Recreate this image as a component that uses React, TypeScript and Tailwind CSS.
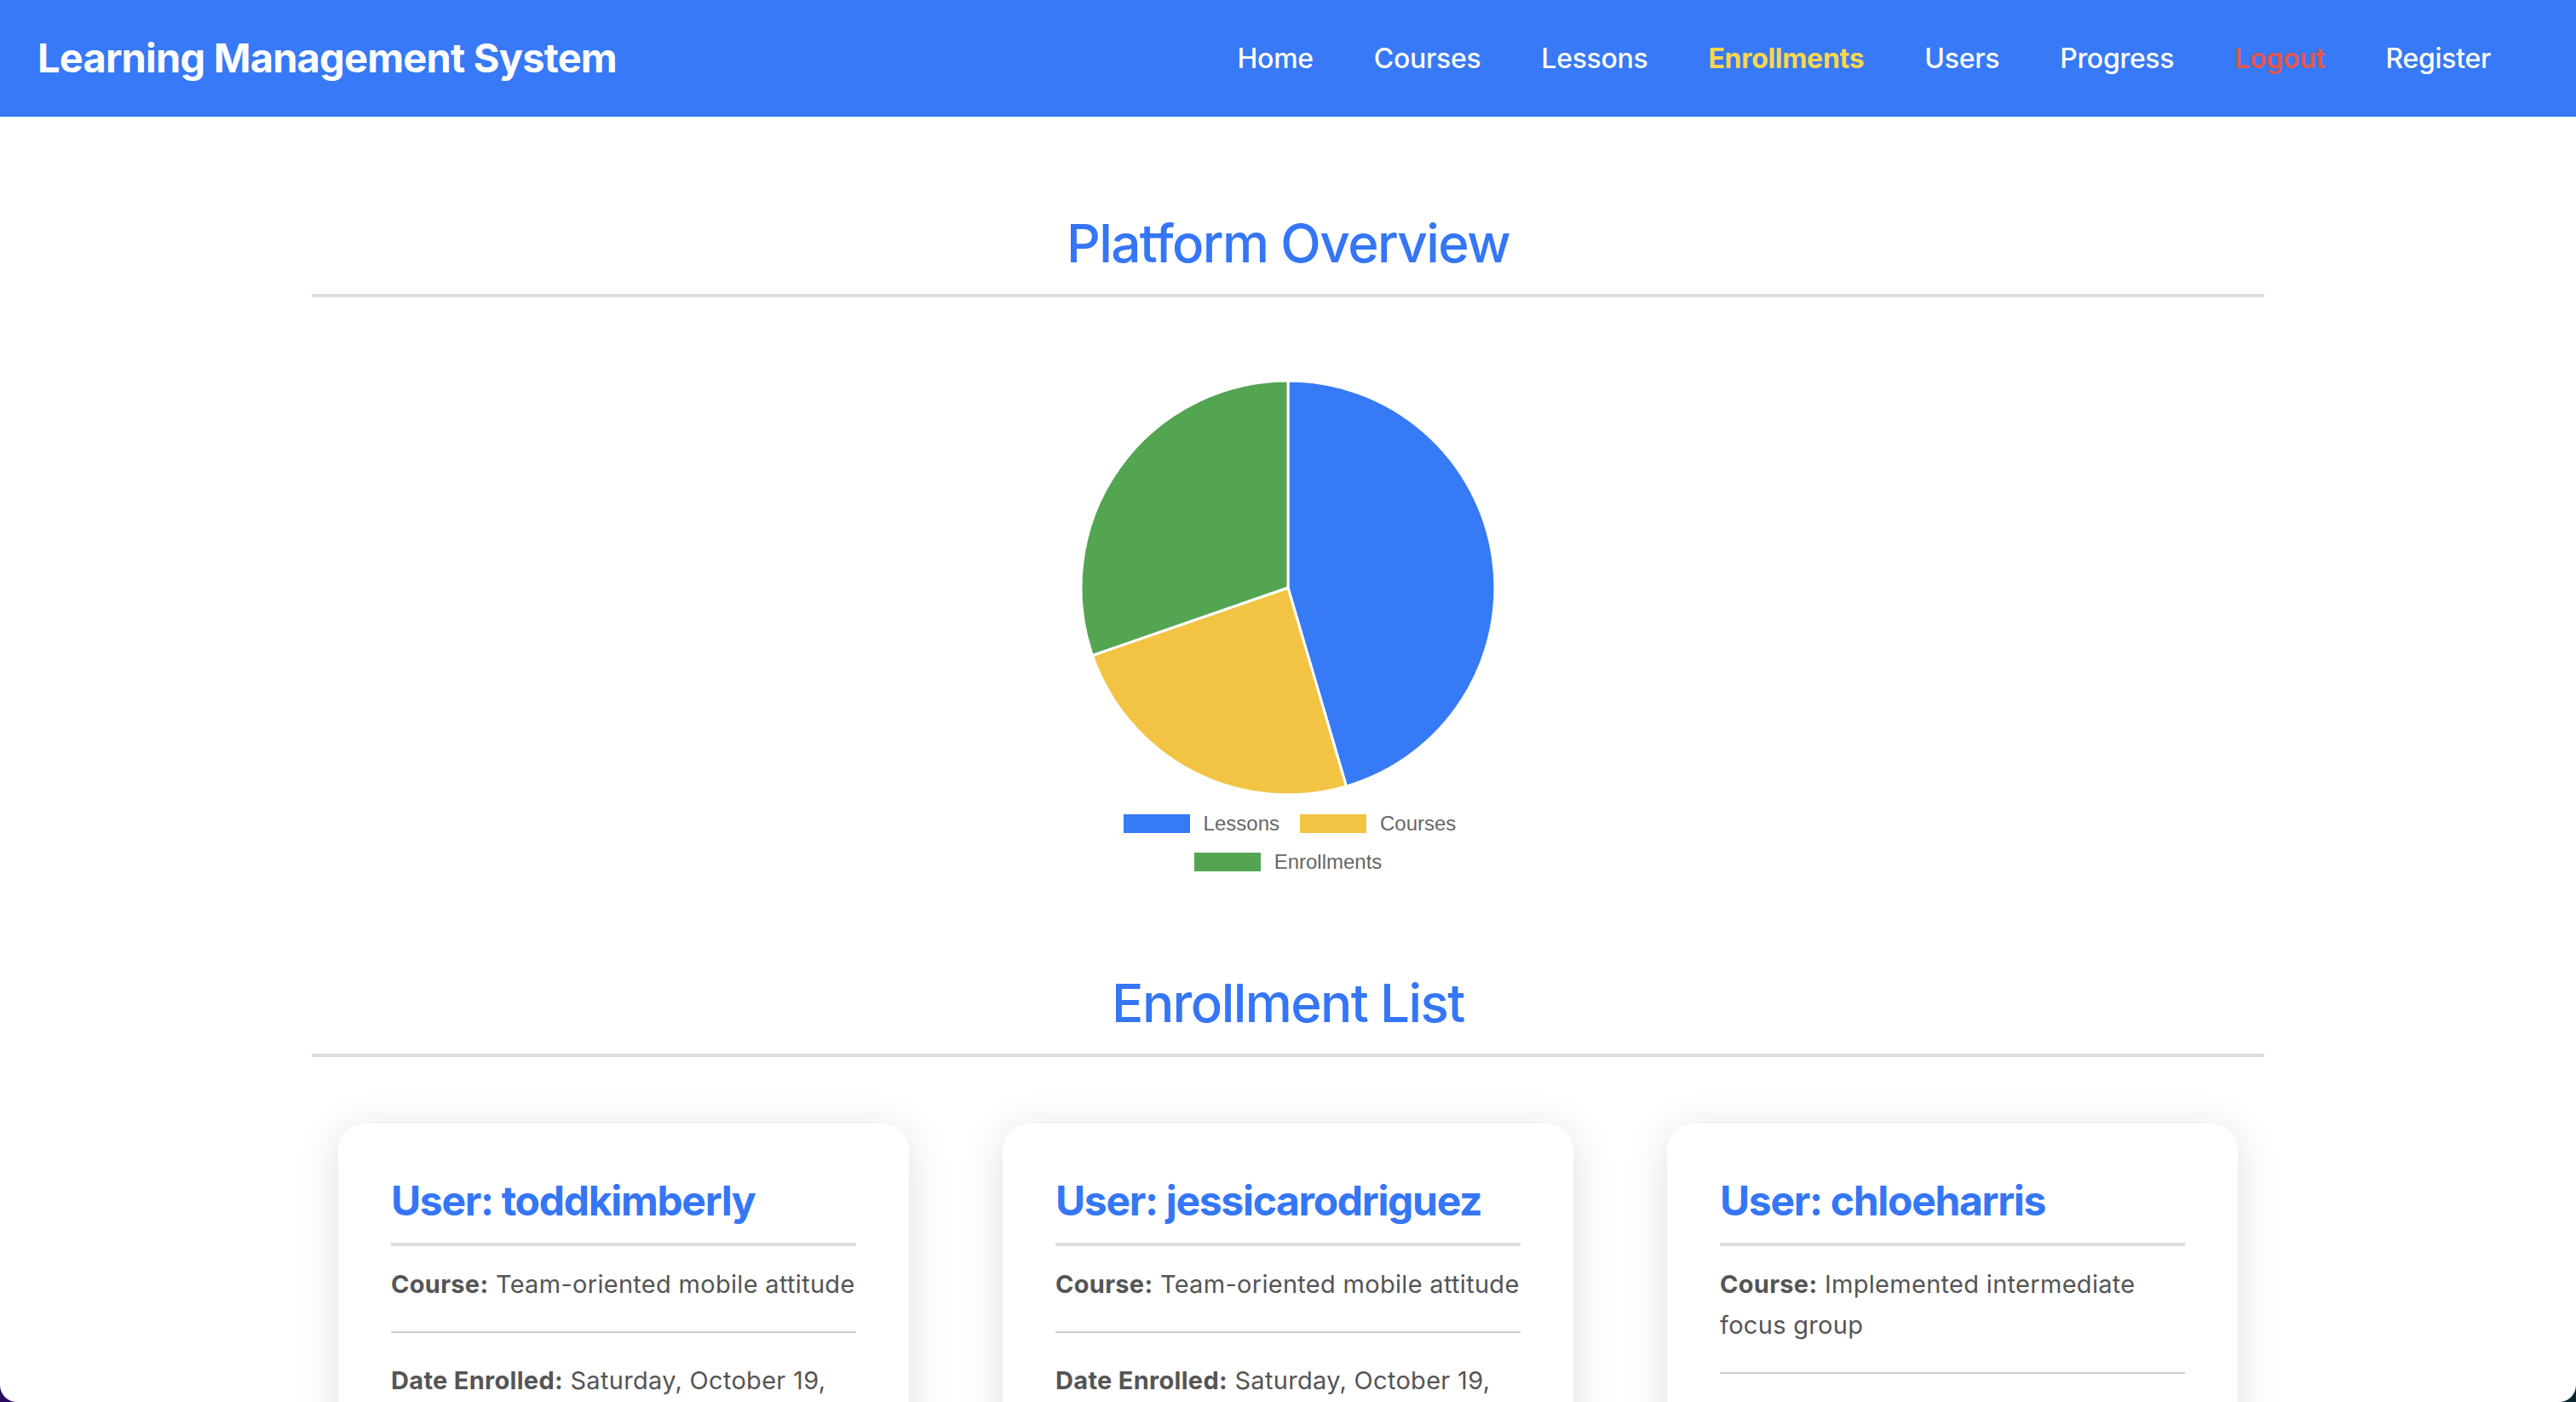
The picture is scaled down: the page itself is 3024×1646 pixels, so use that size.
import React from 'react';

const navLinks = [
    {label: 'Home', className: 'text-white font-medium'},
    {label: 'Courses', className: 'text-white font-medium'},
    {label: 'Lessons', className: 'text-white font-medium'},
    {label: 'Enrollments', className: 'text-[#f8d74c] font-bold'},
    {label: 'Users', className: 'text-white font-medium'},
    {label: 'Progress', className: 'text-white font-medium'},
    {label: 'Logout', className: 'text-[#e5564c] font-semibold'},
    {label: 'Register', className: 'text-white font-medium'},
];

const stats = [
    {label: 'Lessons', value: 15, color: '#377af6'},
    {label: 'Courses', value: 8, color: '#f3c343'},
    {label: 'Enrollments', value: 10, color: '#53a552'},
];

const enrollments = [
    {user: 'toddkimberly', course: 'Team-oriented mobile attitude', date: 'Saturday, October 19, 2024'},
    {user: 'jessicarodriguez', course: 'Team-oriented mobile attitude', date: 'Saturday, October 19, 2024'},
    {user: 'chloeharris', course: 'Implemented intermediate focus group', date: 'Saturday, October 19, 2024'},
];

function PieChart() {
    const size = 490;
    const c = size / 2;
    const r = 243;
    const total = stats.reduce((sum, s) => sum + s.value, 0);
    let start = 0;

    const slices = stats.map((s) => {
        const sweep = (s.value / total) * Math.PI * 2;
        const a0 = start;
        const a1 = start + sweep;
        start = a1;
        const x0 = c + r * Math.sin(a0);
        const y0 = c - r * Math.cos(a0);
        const x1 = c + r * Math.sin(a1);
        const y1 = c - r * Math.cos(a1);
        const large = sweep > Math.PI ? 1 : 0;
        const d = `M ${c} ${c} L ${x0} ${y0} A ${r} ${r} 0 ${large} 1 ${x1} ${y1} Z`;
        return <path key={s.label} d={d} fill={s.color} stroke="#ffffff" strokeWidth={3} strokeLinejoin="round" />;
    });

    return (
        <svg width={size} height={size} viewBox={`0 0 ${size} ${size}`}>
            {slices}
        </svg>
    );
}

function LegendItem({label, color}: {label: string; color: string}) {
    return (
        <div className="flex items-center gap-[16px]">
            <span className="block w-[78px] h-[22px]" style={{backgroundColor: color}} />
            <span className="text-[24px] leading-[24px] text-[#666]">{label}</span>
        </div>
    );
}

function SectionTitle({children}: {children: React.ReactNode}) {
    return (
        <h2 className="text-center text-[62px] leading-[78px] font-medium tracking-[-1.6px] text-[#3476f5] pb-[20px] border-b-4 border-[#dddddd]">
            {children}
        </h2>
    );
}

export default function App() {
    return (
        <div className="h-[1646px] overflow-hidden bg-linear-to-r from-[#2a0c5c] to-[#0c2630]" style={{fontFamily: 'Inter, "Noto Sans", sans-serif'}}>
            <div className="h-full overflow-hidden rounded-b-[20px] bg-white">
                <header className="h-[137px] bg-[#3779f6] flex items-center justify-between pl-[44px] pr-[100px]">
                    <h1 className="text-[47px] font-bold text-white tracking-[-0.8px]">Learning Management System</h1>
                    <nav className="flex items-center gap-[71px] text-[32px] tracking-[-0.3px]">
                        {navLinks.map((link) => (
                            <a key={link.label} href="#" className={link.className}>{link.label}</a>
                        ))}
                    </nav>
                </header>

                <main className="w-[2292px] mx-auto pt-[110px]">
                    <SectionTitle>Platform Overview</SectionTitle>

                    <div className="flex flex-col items-center pt-[96px]">
                        <PieChart />
                        <div className="flex flex-col items-center gap-[21px] pt-[20px]" style={{fontFamily: '"Liberation Sans", Arial, sans-serif'}}>
                            <div className="flex items-center gap-[24px] pl-[4px]">
                                <LegendItem label={stats[0].label} color={stats[0].color} />
                                <LegendItem label={stats[1].label} color={stats[1].color} />
                            </div>
                            <LegendItem label={stats[2].label} color={stats[2].color} />
                        </div>
                    </div>

                    <div className="pt-[115px]">
                        <SectionTitle>Enrollment List</SectionTitle>
                    </div>

                    <div className="grid grid-cols-3 gap-[110px] px-[31px] pt-[78px]">
                        {enrollments.map((e) => (
                            <div key={e.user} className="bg-white rounded-[32px] px-[62px] pt-[62px] pb-[40px] shadow-[0_8px_50px_rgba(0,0,0,0.13)]">
                                <h3 className="text-[48px] leading-[58px] font-bold tracking-[-1.3px] text-[#3476f5] pb-[20px] border-b-4 border-[#dddddd]">
                                    User: {e.user}
                                </h3>
                                <p className="text-[29px] leading-[48px] tracking-[0.3px] text-[#555] pt-[21px] pb-[31px] border-b-2 border-[#cccccc]">
                                    <span className="font-bold">Course:</span> {e.course}
                                </p>
                                <p className="text-[29px] leading-[48px] tracking-[0.3px] text-[#555] pt-[32px] pb-[31px] border-b-2 border-[#cccccc]">
                                    <span className="font-bold">Date Enrolled:</span> {e.date}
                                </p>
                            </div>
                        ))}
                    </div>
                </main>
            </div>
        </div>
    );
}
